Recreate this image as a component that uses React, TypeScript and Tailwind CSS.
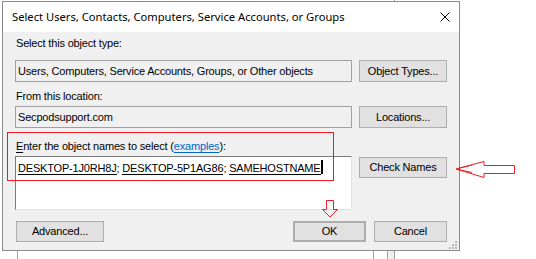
import React from 'react';

const Btn = ({ children, className = '' }: { children: React.ReactNode; className?: string }) => (
  <div className={`flex items-center justify-center bg-[#e1e1e1] border border-[#adadad] text-black ${className}`}>
    {children}
  </div>
);

export default function App() {
  return (
    <div className="relative w-[536px] h-[259px] overflow-hidden bg-white font-['Liberation_Sans',Arial,sans-serif] text-[11px] leading-[13px] tracking-[-0.18px] text-black">
      {/* windows behind the dialog */}
      <div className="absolute left-[394px] top-0 h-[259px] w-px bg-[#a0a0a0]" />
      <div className="absolute left-[17px] top-[240px] h-[20px] w-px bg-[#a0a0a0]" />
      <div className="absolute left-[373px] top-[240px] h-[20px] w-px bg-[#a0a0a0]" />
      <div className="absolute left-[387px] top-[240px] h-[20px] w-[7px] border-l border-[#a0a0a0] bg-[#f0f0f0]" />

      {/* dialog */}
      <div className="relative ml-[2px] mt-[1px] flex h-[250px] w-[458px] flex-col border border-[#8c8c8c] bg-[#f0f0f0]">
        <div className="flex h-[30px] items-center justify-between bg-white pl-[9px] pr-[9px]">
          <span className="font-['Noto_Sans',sans-serif] text-[11.2px] leading-[16px] tracking-normal">
            Select Users, Contacts, Computers, Service Accounts, or Groups
          </span>
          <svg width="10" height="10" viewBox="0 0 10 10">
            <path d="M0.5 0.5 L9.5 9.5 M9.5 0.5 L0.5 9.5" stroke="#000" strokeWidth="1" />
          </svg>
        </div>

        <div className="flex flex-1 flex-col px-[12px] pt-[5px]">
          <div className="pl-[1px]">Select this object type:</div>
          <div className="mt-[10px] flex gap-[7px]">
            <div className="flex h-[22px] w-[337px] items-center border border-[#a0a0a0] pl-[2px]">
              Users, Computers, Service Accounts, Groups, or Other objects
            </div>
            <Btn className="h-[22px] w-[88px]">Object Types...</Btn>
          </div>

          <div className="mt-[8px] pl-[1px]">From this location:</div>
          <div className="mt-[3px] flex gap-[7px]">
            <div className="flex h-[22px] w-[337px] items-center border border-[#a0a0a0] pl-[2px]">
              Secpodsupport.com
            </div>
            <Btn className="h-[22px] w-[88px]">Locations...</Btn>
          </div>

          <div className="mt-[12px] pl-[1px]">
            <span className="underline underline-offset-[2px]">E</span>nter the object names to select (
            <span className="text-[#0066cc] underline underline-offset-[2px]">examples</span>):
          </div>
          <div className="mt-[3px] flex items-start gap-[7px]">
            <div className="h-[54px] w-[337px] border border-t-[#7a7a7a] border-l-[#7a7a7a] border-r-[#e3e3e3] border-b-[#e3e3e3] bg-white pl-[2px] pt-[1px]">
              <span className="border-b border-black">DESKTOP-1J0RH8J</span>
              <span>; </span>
              <span className="border-b border-black">DESKTOP-5P1AG86</span>
              <span>; </span>
              <span className="border-b border-black">SAMEHOSTNAME</span>
              <span className="inline-block h-[14px] w-[2px] translate-y-[2px] bg-black" />
            </div>
            <Btn className="mt-px h-[21px] w-[88px]">Check Names</Btn>
          </div>

          <div className="mt-[11px] flex">
            <Btn className="ml-px h-[21px] w-[88px]">Advanced...</Btn>
            <Btn className="ml-auto h-[21px] w-[73px] border-2 border-[#0078d7]">OK</Btn>
            <Btn className="ml-[8px] h-[21px] w-[73px]">Cancel</Btn>
          </div>
        </div>

        {/* size grip */}
        <svg className="absolute bottom-[1px] right-[2px]" width="8" height="8" viewBox="0 0 8 8">
          <rect x="6" y="0" width="2" height="2" fill="#bcbcbc" />
          <rect x="3" y="3" width="2" height="2" fill="#bcbcbc" />
          <rect x="6" y="3" width="2" height="2" fill="#bcbcbc" />
          <rect x="0" y="6" width="2" height="2" fill="#bcbcbc" />
          <rect x="3" y="6" width="2" height="2" fill="#bcbcbc" />
          <rect x="6" y="6" width="2" height="2" fill="#bcbcbc" />
        </svg>
      </div>

      {/* annotations */}
      <div className="absolute left-[7px] top-[132px] h-[49px] w-[327px] border border-[#ed1c24]" />
      <svg className="absolute left-[450px] top-[155px]" width="70" height="28" viewBox="450 155 70 28">
        <polygon
          points="456,169 484,161.5 484,165.5 514.5,165.5 514.5,173.5 484,173.5 484,177.5"
          fill="none"
          stroke="#ed1c24"
          strokeWidth="1"
        />
        <path d="M458 168.5 L472 165 M458 169.5 L472 172.5" stroke="#ed1c24" strokeWidth="1" fill="none" />
      </svg>
      <svg className="absolute left-[320px] top-[198px]" width="20" height="22" viewBox="320 198 20 22">
        <polygon
          points="326.5,200.5 333.5,200.5 333.5,209.5 337.5,209.5 330,217 322.5,209.5 326.5,209.5"
          fill="none"
          stroke="#ed1c24"
          strokeWidth="1"
        />
      </svg>
    </div>
  );
}
